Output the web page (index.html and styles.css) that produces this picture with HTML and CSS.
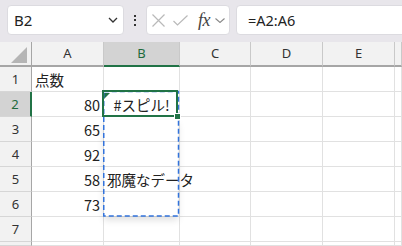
FILE: index.html
```html
<!DOCTYPE html>
<html lang="ja">
<head>
<meta charset="utf-8">
<title>Spill</title>
<link rel="stylesheet" href="styles.css">
</head>
<body>
<div class="toolbar">
  <div class="namebox">
    <span class="name">B2</span>
    <svg class="chev" width="10" height="6" viewBox="0 0 10 6"><path d="M1 1 L5 5 L9 1" fill="none" stroke="#333" stroke-width="1.3"/></svg>
  </div>
  <div class="dots"><i></i><i></i><i></i></div>
  <div class="fxbox">
    <svg class="xicon" width="13" height="13" viewBox="0 0 13 13"><path d="M0.5 0.5 L12.5 12.5 M12.5 0.5 L0.5 12.5" stroke="#b9b9b9" stroke-width="1.2" fill="none"/></svg>
    <svg class="check" width="15" height="11" viewBox="0 0 15 11"><path d="M0.5 6 L4.5 10 L14.5 0.5" stroke="#b9b9b9" stroke-width="1.2" fill="none"/></svg>
    <span class="fx">fx</span>
    <svg class="chev2" width="10" height="5" viewBox="0 0 10 5"><path d="M0.5 0.5 L5 4.5 L9.5 0.5" fill="none" stroke="#888" stroke-width="1.1"/></svg>
  </div>
  <div class="formula">=A2:A6</div>
</div>
<div class="sheet">
  <div class="grid">
    <div class="hd corner"><svg width="16" height="16" viewBox="0 0 16 16"><path d="M16 0 L16 16 L0 16 Z" fill="#b5b5b5"/></svg></div>
    <div class="hd col">A</div>
    <div class="hd col sel">B</div>
    <div class="hd col">C</div>
    <div class="hd col">D</div>
    <div class="hd col">E</div>
    <div class="hd col"></div>

    <div class="rh">1</div><div class="c l">点数</div><div class="c"></div><div class="c"></div><div class="c"></div><div class="c"></div><div class="c"></div>
    <div class="rh rsel">2</div><div class="c r">80</div><div class="c ctr err">#スピル!</div><div class="c"></div><div class="c"></div><div class="c"></div><div class="c"></div>
    <div class="rh">3</div><div class="c r">65</div><div class="c"></div><div class="c"></div><div class="c"></div><div class="c"></div><div class="c"></div>
    <div class="rh">4</div><div class="c r">92</div><div class="c"></div><div class="c"></div><div class="c"></div><div class="c"></div><div class="c"></div>
    <div class="rh">5</div><div class="c r">58</div><div class="c l over">邪魔なデータ</div><div class="c"></div><div class="c"></div><div class="c"></div><div class="c"></div>
    <div class="rh">6</div><div class="c r">73</div><div class="c"></div><div class="c"></div><div class="c"></div><div class="c"></div><div class="c"></div>
    <div class="rh">7</div><div class="c"></div><div class="c"></div><div class="c"></div><div class="c"></div><div class="c"></div><div class="c"></div>
    <div class="rh short"></div><div class="c short"></div><div class="c short"></div><div class="c short"></div><div class="c short"></div><div class="c short"></div><div class="c short"></div>
  </div>
  <div class="spill">
    <svg width="78" height="128" viewBox="0 0 78 128"><rect x="1.75" y="1.5" width="74.75" height="124.5" fill="none" stroke="#3273dc" stroke-width="1.5" stroke-dasharray="5 3"/></svg>
  </div>
  <div class="active"><span class="handle"></span></div>
</div>
</body>
</html>
```

FILE: styles.css
```css
* { box-sizing: border-box; }
html, body { margin: 0; padding: 0; overflow: hidden; }
body {
  width: 402px;
  height: 246px;
  background: #fff;
  font-family: "Noto Sans", "Noto Sans CJK JP", sans-serif;
  color: #222;
}
.toolbar {
  height: 42px;
  background: #e8e6eb;
  display: flex;
  align-items: flex-start;
  padding: 5px 0 0 7px;
}
.namebox {
  width: 117px;
  height: 30px;
  background: #fff;
  border: 1px solid #dcdbe0;
  border-radius: 4px;
  display: flex;
  align-items: center;
  padding: 0 5px 0 6px;
}
.name {
  flex: 1;
  font-size: 15px;
  color: #222;
}
.chev { display: block; }
.dots {
  width: 22px;
  height: 30px;
  display: flex;
  flex-direction: column;
  align-items: center;
  justify-content: center;
  gap: 2.5px;
}
.dots i {
  display: block;
  width: 2px;
  height: 2px;
  background: #333;
}
.fxbox {
  width: 84px;
  height: 30px;
  background: #fff;
  border: 1px solid #dcdbe0;
  border-radius: 4px;
  display: flex;
  align-items: center;
  padding-left: 5px;
}
.xicon { display: block; }
.check { display: block; margin-left: 8px; }
.fx {
  margin-left: 10px;
  font-family: "Liberation Serif", serif;
  font-style: italic;
  font-size: 18px;
  color: #444;
  line-height: 1;
  letter-spacing: -0.5px;
}
.chev2 { display: block; margin-left: 5px; }
.formula {
  margin-left: 6px;
  flex: 1;
  margin-right: -10px;
  height: 30px;
  background: #fff;
  border: 1px solid #dcdbe0;
  border-radius: 4px;
  padding-left: 11px;
  display: flex;
  align-items: center;
  font-family: "Noto Sans", sans-serif;
  font-size: 14.5px;
  color: #222;
}
.sheet {
  position: relative;
}
.grid {
  display: grid;
  grid-template-columns: 32px 72px 76px 71px 72px 72px 1fr;
  grid-template-rows: 25px;
  grid-auto-rows: 25px;
}
.grid .short { height: 4px; }
.hd {
  background: #f2f2f2;
  border-right: 1px solid #c9c9c9;
  border-bottom: 2px solid #a6a6a6;
  font-family: "Noto Sans", sans-serif;
  font-size: 13px;
  color: #333;
  display: flex;
  align-items: center;
  justify-content: center;
  padding-bottom: 2px;
}
.corner {
  border-right: 1px solid #a6a6a6;
  justify-content: flex-end;
  align-items: flex-end;
  padding: 0 4px 2px 0;
}
.corner svg { display: block; }
.hd.sel {
  background: #d3d3d3;
  border-bottom-color: #217346;
  color: #1e6b3c;
}
.rh {
  background: #f2f2f2;
  border-right: 1px solid #a6a6a6;
  border-bottom: 1px solid #d6d6d6;
  font-family: "Noto Sans", sans-serif;
  font-size: 13px;
  color: #333;
  display: flex;
  align-items: center;
  justify-content: center;
}
.rh.rsel {
  background: #d3d3d3;
  border-right: 2px solid #217346;
  color: #1e6b3c;
}
.c {
  position: relative;
  border-right: 1px solid #e1e1e1;
  border-bottom: 1px solid #e1e1e1;
  font-family: "Noto Sans CJK JP", sans-serif;
  font-size: 14.5px;
  color: #222;
  display: flex;
  align-items: center;
  white-space: nowrap;
  padding: 0 3px;
}
.c.r { justify-content: flex-end; }
.c.ctr { justify-content: center; }
.c.over { overflow: visible; z-index: 2; }
.c.err::before {
  content: "";
  position: absolute;
  left: 0;
  top: 1px;
  width: 0;
  height: 0;
  border-top: 6px solid #217346;
  border-right: 6px solid transparent;
}
.spill {
  position: absolute;
  left: 102px;
  top: 48px;
  width: 78px;
  height: 128px;
  z-index: 3;
}
.spill::after {
  content: "";
  position: absolute;
  left: 2px;
  right: 2px;
  top: 30px;
  bottom: 2px;
  box-shadow: 0 4px 7px rgba(0, 0, 0, 0.13);
  z-index: -1;
}
.spill svg { display: block; }
.active {
  position: absolute;
  left: 102px;
  top: 48px;
  width: 76px;
  height: 27px;
  border: 2px solid #217346;
  z-index: 4;
}
.handle {
  position: absolute;
  right: -5px;
  bottom: -5px;
  width: 7px;
  height: 7px;
  background: #217346;
  border: 1px solid #fff;
}
```
